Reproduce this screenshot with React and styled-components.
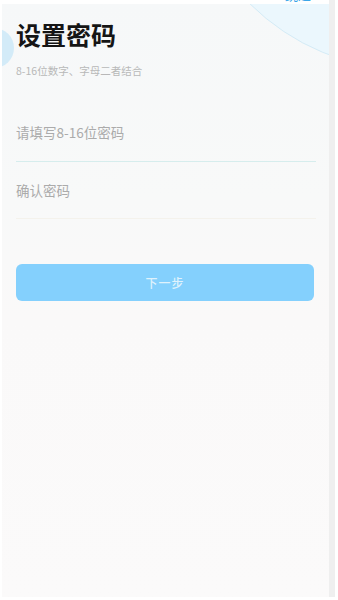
import React from "react";
import styled, { createGlobalStyle } from "styled-components";

const Global = createGlobalStyle`
  html, body { margin: 0; padding: 0; background: #ffffff; }
  body { font-family: "Noto Sans CJK SC", "Noto Sans", sans-serif; }
  * { box-sizing: border-box; }
`;

const Frame = styled.div`
  width: 338px;
  height: 600px;
  display: flex;
  background: #ffffff;
  overflow: hidden;
`;

const Screen = styled.div`
  position: relative;
  width: 327px;
  height: 597px;
  margin-left: 2px;
  background: linear-gradient(180deg, #f6f8f9 0px, #f8f9f9 200px, #faf9f9 320px, #fbfafa 600px);
  overflow: hidden;
  display: flex;
  flex-direction: column;
`;

const Scrollbar = styled.div`
  width: 6px;
  height: 597px;
  background: #efefef;
`;

const BigBubble = styled.div`
  position: absolute;
  left: 181px;
  top: -382px;
  width: 452px;
  height: 452px;
  border-radius: 50%;
  background: #ebf7fd;
  border: 1.5px solid #d4ebf6;
`;

const SmallBubble = styled.div`
  position: absolute;
  left: -28px;
  top: 28px;
  width: 40px;
  height: 40px;
  border-radius: 50%;
  background: #d3ebf8;
`;

const TopBar = styled.div`
  position: relative;
  z-index: 1;
  height: 4px;
  background: #ffffff;
  overflow: hidden;
  display: flex;
  align-items: flex-end;
  justify-content: space-between;
  padding: 0 18px 0 16px;
`;

const TopItem = styled.span`
  font-size: 13px;
  line-height: 14px;
  margin-bottom: 2px;
  color: ${(p) => p.$color};
`;

const Content = styled.div`
  position: relative;
  z-index: 1;
  display: flex;
  flex-direction: column;
  padding: 0 13px 0 14px;
`;

const Title = styled.h1`
  margin: 15px 0 0;
  font-size: 25px;
  line-height: 30px;
  font-weight: 700;
  color: #151515;
`;

const Subtitle = styled.p`
  margin: 15px 0 0;
  font-size: 10.5px;
  line-height: 14px;
  color: #b8b8b8;
`;

const Form = styled.div`
  margin-top: 24px;
  display: flex;
  flex-direction: column;
`;

const Field = styled.div`
  height: ${(p) => p.$h}px;
  display: flex;
  align-items: center;
  border-bottom: 1.5px solid ${(p) => p.$line};
`;

const Input = styled.input`
  width: 100%;
  border: none;
  outline: none;
  background: transparent;
  padding: 0;
  font-family: inherit;
  font-size: 13.5px;
  color: #333;
  &::placeholder { color: #ababab; }
`;

const Button = styled.button`
  margin-top: 45px;
  margin-right: 2px;
  height: 37px;
  border: none;
  border-radius: 6px;
  background: #84d0fd;
  color: #dff2fc;
  font-family: inherit;
  font-size: 12px;
  font-weight: 500;
  letter-spacing: 1px;
`;

export default function App() {
  return (
    <>
      <Global />
      <Frame>
        <Screen>
          <BigBubble />
          <SmallBubble />
          <TopBar>
            <TopItem $color="#555">‹</TopItem>
            <TopItem $color="#3aa6e8">跳过</TopItem>
          </TopBar>
          <Content>
            <Title>设置密码</Title>
            <Subtitle>8-16位数字、字母二者结合</Subtitle>
            <Form>
              <Field $h={60} $line="#d6eded">
                <Input type="password" placeholder="请填写8-16位密码" />
              </Field>
              <Field $h={57} $line="#f4f2ec">
                <Input type="password" placeholder="确认密码" />
              </Field>
            </Form>
            <Button>下一步</Button>
          </Content>
        </Screen>
        <Scrollbar />
      </Frame>
    </>
  );
}
